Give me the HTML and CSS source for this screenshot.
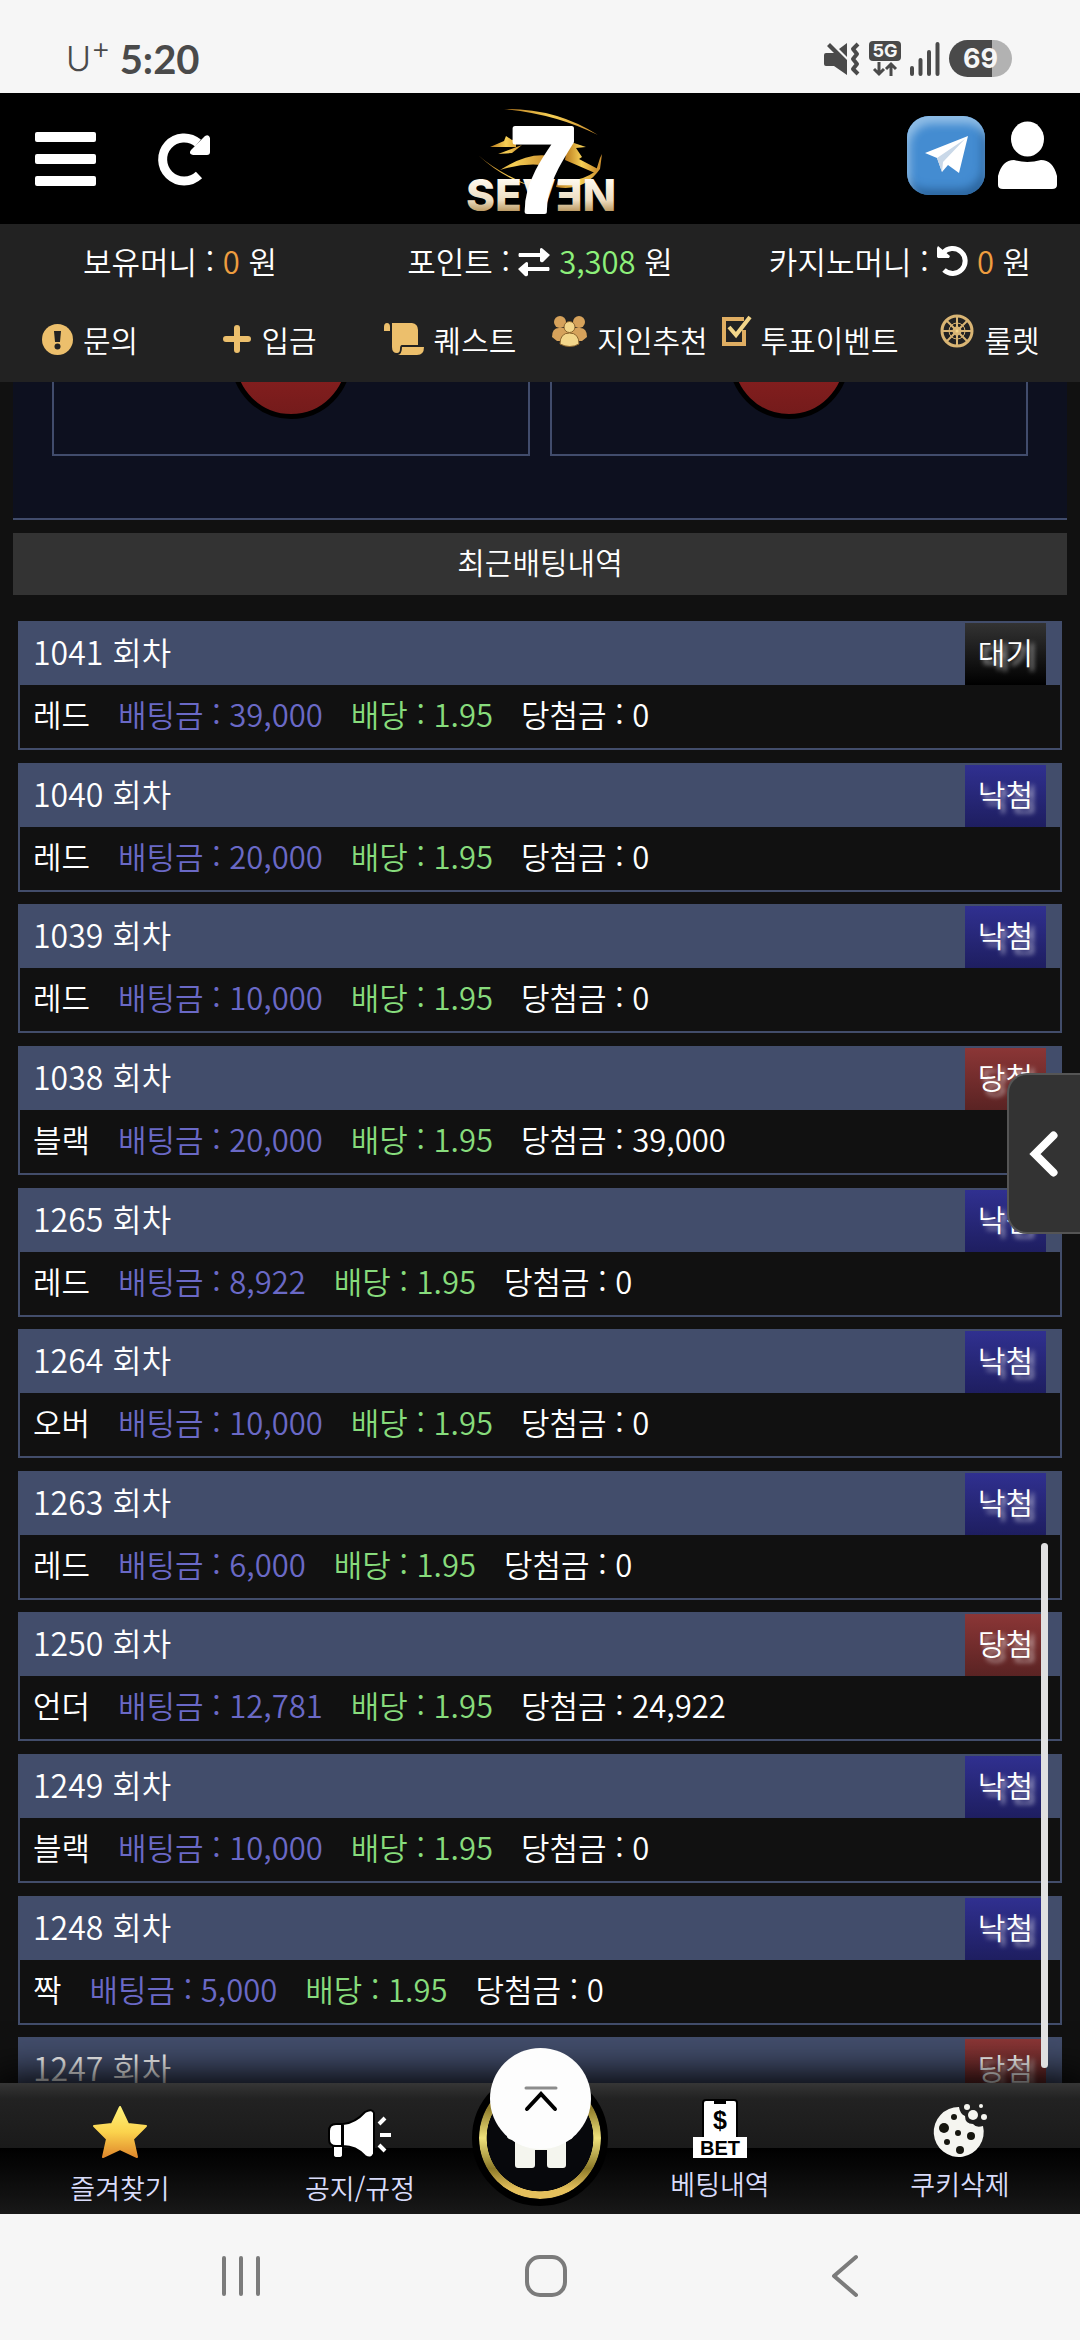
FILE: index.html
```html
<!DOCTYPE html>
<html lang="ko">
<head>
<meta charset="utf-8">
<meta name="viewport" content="width=device-width, initial-scale=1">
<title>SEVEN</title>
<link rel="stylesheet" href="styles.css">
</head>
<body>
<div class="status">
  <div class="status-side"><span class="carrier">U<sup>+</sup></span><span class="clock">5:20</span></div>
  <div class="status-side status-icons">
    <svg width="36" height="34" viewBox="0 0 36 34" fill="#4a4a4a"><path d="M2 11h8l-7-7 3-3 17 17v15L10 24H2q-2 0-2-2v-9q0-2 2-2zM15 7l8-6v14z"/><path d="M34 2l-5 5 4 5-4 5 4 5-4 5 5 5" fill="none" stroke="#4a4a4a" stroke-width="4" stroke-linejoin="round"/></svg>
    <span class="network"><span class="network-tag">5G</span><svg width="24" height="14" viewBox="0 0 24 14" fill="none" stroke="#4a4a4a" stroke-width="3"><path d="M6 0v12M1 7l5 5 5-5M18 14V2M13 7l5-5 5 5"/></svg></span>
    <svg width="30" height="34" viewBox="0 0 30 34" stroke="#4a4a4a" stroke-width="4" stroke-linecap="round"><path d="M2 26v6M10.500 18v14M19 10v22M27.500 2v30"/></svg>
    <span class="battery">69</span>
  </div>
</div>

<header class="header">
  <div class="header-side">
    <button class="icon-btn" aria-label="메뉴"><svg width="61" height="54" viewBox="0 0 61 54" fill="#fff"><rect width="61" height="10" y="0" rx="2"/><rect width="61" height="10" y="22" rx="2"/><rect width="61" height="10" y="44" rx="2"/></svg></button>
    <button class="icon-btn" aria-label="새로고침"><svg width="52" height="52" viewBox="0 0 52 52"><path d="M40 10A21.500 21.500 0 1 0 41 42" fill="none" stroke="#fff" stroke-width="9"/><path d="M47 3q4-2 5 2v14q0 3-3 3H35q-5-1-2-5z" fill="#fff"/></svg></button>
  </div>
  <a class="logo" href="#" aria-label="SEVEN">
    <svg width="152" height="108" viewBox="0 0 152 108">
      <defs>
        <linearGradient id="gold" x1="0" y1="0" x2="1" y2="0"><stop offset="0" stop-color="#b8791d"/><stop offset=".5" stop-color="#f6cf55"/><stop offset="1" stop-color="#c98b2c"/></linearGradient>
        <linearGradient id="letters" x1="0" y1="0" x2="0" y2="1"><stop offset=".2" stop-color="#fffaf0"/><stop offset=".6" stop-color="#ecdcc0"/><stop offset=".85" stop-color="#b08a4c"/></linearGradient>
      </defs>
      <g fill="url(#gold)">
        <path d="M40 4Q92 3 134 30Q92 9 40 4z"/>
        <path d="M26 42l14-6 2-5 6 4 4-1v8zM34 49l24-9-10 8z"/>
        <path d="M104 36l18 6-10 1 6 9-3 2 19 10-3 4-30-13z"/>
        <path d="M14 50Q32 66 62 79l10-4 2 8Q42 76 14 50zM36 65q28-18 50-14l-8 9q-20-2-42 5z"/>
        <path d="M132 66l4-13 2-4-2 15q-16 23-44 18l2-7q20 4 38-9z"/>
      </g>
      <text x="2" y="106" font-family="Inter, sans-serif" font-weight="800" font-size="44" fill="url(#letters)">SEVƎN</text>
      <text x="46" y="106" font-family="Liberation Sans, Arial, sans-serif" font-weight="700" font-size="120" fill="#fff" stroke="#fff" stroke-width="5" stroke-linejoin="round">7</text>
    </svg>
  </a>
  <div class="header-side header-right">
    <a class="telegram" href="#" aria-label="텔레그램"><svg width="43" height="38" viewBox="0 0 43 38"><path d="M0 17L43 0 34 37 23 29 17 36 12 22z" fill="#fff"/><path d="M12 22L40 3 18 26 17 36z" fill="#c9d8e8"/></svg></a>
    <button class="icon-btn" aria-label="내 정보"><svg width="59" height="68" viewBox="0 0 59 68" fill="#fff"><ellipse cx="29.500" cy="18" rx="16.500" ry="17.500"/><path d="M16 39q13 4 27 0 12 0 16 16v9q0 4-5 4H5q-5 0-5-4v-9q4-16 16-16z"/></svg></button>
  </div>
</header>

<section class="account">
  <div class="balances">
    <p>보유머니 : <b class="orange">0</b> 원</p>
    <p>포인트 : <svg width="32" height="28" viewBox="0 0 32 28" fill="#fff"><path d="M1 5h21V1q1-2 3 0l7 6-7 7q-2 1-3-1V9H1q-1-2 0-4zM31 19H10v-4q-1-2-3 0l-7 6 7 7q2 1 3-1v-4h21q1-2 0-4z"/></svg> <b class="green">3,308</b> 원</p>
    <p>카지노머니 : <svg width="31" height="31" viewBox="0 0 31 31"><path d="M6 8A12.500 12.500 0 1 1 7 25" fill="none" stroke="#fff" stroke-width="5"/><path d="M0 3l1-2 12 10-1 2H1l-1-1z" fill="#fff"/></svg> <b class="orange">0</b> 원</p>
  </div>
  <nav class="shortcuts">
    <a href="#"><svg width="31" height="31" viewBox="0 0 31 31"><circle cx="15.500" cy="15.500" r="15.500" fill="#ecbf6c"/><path d="M12 7h7l-1 11h-5z" fill="#222"/><circle cx="15.500" cy="22.500" r="3" fill="#222"/></svg>문의</a>
    <a href="#"><svg width="28" height="28" viewBox="0 0 28 28"><path d="M14 3v22M3 14h22" stroke="#ecbf6c" stroke-width="6" stroke-linecap="round"/></svg>입금</a>
    <a href="#"><svg width="40" height="32" viewBox="0 0 40 32" fill="#ecbf6c"><path d="M0 8V4q0-4 3-4t3 4v4zM8 0h20q6 1 6 7v15H18q-2 0-2 4 0 4-3 4-5 0-5-6zM18 24h22q0 8-7 8H14q4-1 4-8z"/></svg>퀘스트</a>
    <a href="#"><svg class="lift" width="35" height="31" viewBox="0 0 35 31"><g fill="#d6a25b"><circle cx="8" cy="6" r="6"/><circle cx="27" cy="6" r="6"/><path d="M0 21q0-9 7-9h21q7 0 7 9l-5 4H5z"/></g><g fill="#f3d68a" stroke="#8a642d"><circle cx="17.500" cy="11" r="5.500"/><path d="M8 28q0-11 9.500-11T27 28q-9 5-19 0z"/></g></svg>지인추천</a>
    <a href="#"><svg class="lift" width="29" height="31" viewBox="0 0 29 31" fill="none" stroke="#e0ae62" stroke-width="4"><path d="M22 3H2v25h20V14"/><path d="M7 11l7 8L28 1" stroke="#f3d68a"/></svg>투표이벤트</a>
    <a href="#"><svg class="lift" width="34" height="34" viewBox="0 0 34 34" fill="none" stroke="#d9b574" stroke-width="3"><circle cx="17" cy="17" r="15"/><circle cx="17" cy="17" r="8" stroke-width="1"/><path d="M17 1v32M1 17h32M6 6l22 22M28 6L6 28" stroke-width="2"/><circle cx="17" cy="17" r="3" fill="#f3d68a"/></svg>룰렛</a>
  </nav>
</section>

<main class="main">
  <section class="board">
    <div class="pick"><span class="ball"></span></div>
    <div class="pick"><span class="ball"></span></div>
  </section>
  <h1 class="title">최근배팅내역</h1>
  <ul class="bets">
    <li><header><span>1041 회차</span><span class="badge wait">대기</span></header><p><span>레드</span><span class="stake">배팅금 : 39,000</span><span class="odds">배당 : 1.95</span><span>당첨금 : 0</span></p></li>
    <li><header><span>1040 회차</span><span class="badge lose">낙첨</span></header><p><span>레드</span><span class="stake">배팅금 : 20,000</span><span class="odds">배당 : 1.95</span><span>당첨금 : 0</span></p></li>
    <li><header><span>1039 회차</span><span class="badge lose">낙첨</span></header><p><span>레드</span><span class="stake">배팅금 : 10,000</span><span class="odds">배당 : 1.95</span><span>당첨금 : 0</span></p></li>
    <li><header><span>1038 회차</span><span class="badge win">당첨</span></header><p><span>블랙</span><span class="stake">배팅금 : 20,000</span><span class="odds">배당 : 1.95</span><span>당첨금 : 39,000</span></p></li>
    <li><header><span>1265 회차</span><span class="badge lose">낙첨</span></header><p><span>레드</span><span class="stake">배팅금 : 8,922</span><span class="odds">배당 : 1.95</span><span>당첨금 : 0</span></p></li>
    <li><header><span>1264 회차</span><span class="badge lose">낙첨</span></header><p><span>오버</span><span class="stake">배팅금 : 10,000</span><span class="odds">배당 : 1.95</span><span>당첨금 : 0</span></p></li>
    <li><header><span>1263 회차</span><span class="badge lose">낙첨</span></header><p><span>레드</span><span class="stake">배팅금 : 6,000</span><span class="odds">배당 : 1.95</span><span>당첨금 : 0</span></p></li>
    <li><header><span>1250 회차</span><span class="badge win">당첨</span></header><p><span>언더</span><span class="stake">배팅금 : 12,781</span><span class="odds">배당 : 1.95</span><span>당첨금 : 24,922</span></p></li>
    <li><header><span>1249 회차</span><span class="badge lose">낙첨</span></header><p><span>블랙</span><span class="stake">배팅금 : 10,000</span><span class="odds">배당 : 1.95</span><span>당첨금 : 0</span></p></li>
    <li><header><span>1248 회차</span><span class="badge lose">낙첨</span></header><p><span>짝</span><span class="stake">배팅금 : 5,000</span><span class="odds">배당 : 1.95</span><span>당첨금 : 0</span></p></li>
    <li><header><span>1247 회차</span><span class="badge win">당첨</span></header></li>
  </ul>
  <button class="drawer" aria-label="열기"><svg width="28" height="46" viewBox="0 0 28 46"><path d="M23.500 4.500L5 23l18.500 18.500" fill="none" stroke="#fff" stroke-width="8" stroke-linecap="round"/></svg></button>
</main>

<nav class="tabs">
  <span class="scrollbar"></span>
  <a href="#"><svg width="56" height="54" viewBox="0 0 56 54"><defs><linearGradient id="star" x1="0" y1="0" x2="0" y2="1"><stop offset="0" stop-color="#fff27a"/><stop offset=".5" stop-color="#fbd34d"/><stop offset="1" stop-color="#e0892c"/></linearGradient></defs><path d="M28 2l8 17 18 2-13 13 4 18-17-8-17 8 4-18L2 21l18-2z" fill="url(#star)" stroke="url(#star)" stroke-width="2" stroke-linejoin="round"/></svg><span>즐겨찾기</span></a>
  <a href="#"><svg width="64" height="50" viewBox="0 0 64 50" fill="#fff" stroke="#000" stroke-width="2"><path d="M5 37h10v9q0 3-4 3H9q-4 0-4-3zM8 15h6v22H8q-7 0-7-7v-8q0-7 7-7zM15 15Q27 14 37 3q7-4 9 1v41q-3 6-9 2Q28 37 15 37z"/><path d="M51 15l6-6M52 26h11M51 36l6 6" stroke="#fff" stroke-width="4"/></svg><span>공지/규정</span></a>
  <a class="home" href="#" aria-label="홈"><span class="home-ring"><svg width="66" height="60" viewBox="0 0 66 60" fill="#f4f5ee"><path d="M33 0L66 28q0 4-7 4v25q0 3-3 3H43q-3 0-3-3V42H28v15q0 3-3 3H11q-3 0-3-3V32q-8 0-8-4z"/></svg></span></a>
  <a class="raised" href="#"><svg width="56" height="60" viewBox="0 0 56 60"><path d="M11 4q0-3 3-3h28q3 0 3 3v36H11z" fill="#fff" stroke="#000" stroke-width="2"/><path d="M22 1h12v4H22z"/><path d="M1 38h54v21H1z" fill="#fff"/><text x="28" y="30" text-anchor="middle" font-family="Liberation Sans, Arial, sans-serif" font-weight="700" font-size="25">$</text><text x="28" y="56" text-anchor="middle" font-family="Liberation Sans, Arial, sans-serif" font-weight="700" font-size="20">BET</text></svg><span>베팅내역</span></a>
  <a class="raised" href="#"><svg width="54" height="56" viewBox="0 0 54 56"><path d="M26 4q1 7 6 9 0 8 8 8 3 4 10 2a25 25 0 1 1-24-19z" fill="#f5f5f0"/><g fill="#16160f"><circle cx="11" cy="25" r="5"/><circle cx="21" cy="14" r="3"/><circle cx="38" cy="33" r="4"/><circle cx="25" cy="30" r="3"/><circle cx="14" cy="39" r="3"/><circle cx="27" cy="47" r="4"/></g><g fill="#f5f5f0"><circle cx="34" cy="4" r="3"/><circle cx="40" cy="12" r="5"/><circle cx="48" cy="3" r="2"/><circle cx="51" cy="14" r="3"/></g></svg><span>쿠키삭제</span></a>
  <button class="to-top" aria-label="맨 위로"><svg width="34" height="26" viewBox="0 0 34 26" fill="none" stroke-linecap="round"><path d="M2 2h30" stroke="#8c8c8c" stroke-width="3"/><path d="M3 23L17 8l14 15" stroke="#000" stroke-width="4"/></svg></button>
</nav>

<nav class="system">
  <button class="icon-btn" aria-label="최근 앱"><svg width="38" height="42" viewBox="0 0 38 42" stroke="#7b7b7b" stroke-width="4" stroke-linecap="round"><path d="M2 3v36M19 3v36M36 3v36"/></svg></button>
  <button class="icon-btn" aria-label="홈 화면"><svg width="42" height="42" viewBox="0 0 42 42" fill="none" stroke="#7b7b7b" stroke-width="4"><rect x="2" y="2" width="38" height="38" rx="13"/></svg></button>
  <button class="icon-btn" aria-label="뒤로"><svg width="28" height="42" viewBox="0 0 28 42" fill="none" stroke="#7b7b7b" stroke-width="4" stroke-linecap="round" stroke-linejoin="round"><path d="M25 2L3 21l22 19"/></svg></button>
</nav>
</body>
</html>
```

FILE: styles.css
```css
* { box-sizing: border-box; margin: 0; padding: 0; }

body {
  display: flex;
  flex-direction: column;
  height: 100vh;
  overflow: hidden;
  background: #111;
  color: #fff;
  font: 350 31px/40px "Noto Sans CJK KR", "Noto Sans", sans-serif;
}

svg { display: block; flex: none; overflow: visible; }
a { color: inherit; text-decoration: none; }
b { font-weight: inherit; }
button { border: 0; background: none; font: inherit; }
.icon-btn { display: block; }
.orange { color: #ee9d3f; }
.green { color: #8df07a; }

/* device status bar */
.status {
  display: flex;
  justify-content: space-between;
  align-items: center;
  padding: 24px 68px 0 66px;
  height: 93px;
  flex: none;
  background: #f6f6f6;
  color: #4a4a4a;
  font-family: Inter, sans-serif;
}
.status-side { display: flex; align-items: center; gap: 9px; }
.carrier { font-size: 34px; font-weight: 300; }
.carrier sup { font-size: 30px; line-height: 0; vertical-align: 12px; }
.clock { font-family: Lato, sans-serif; font-size: 40px; font-weight: 700; }
.network { display: flex; flex-direction: column; align-items: center; gap: 1px; }
.network-tag {
  width: 32px;
  border-radius: 4px;
  background: #4a4a4a;
  color: #f6f6f6;
  font-size: 18px;
  font-weight: 700;
  line-height: 20px;
  text-align: center;
}
.battery {
  width: 63px;
  border-radius: 19px;
  background: linear-gradient(90deg, #4a4a4a 68%, #b2b2b2 68%);
  color: #f6f6f6;
  font-size: 27px;
  font-weight: 700;
  line-height: 37px;
  text-align: center;
}

/* site header */
.header {
  display: grid;
  grid-template-columns: 1fr auto 1fr;
  align-items: center;
  flex: none;
  height: 131px;
  padding: 0 23px 0 35px;
  background: #000;
}
.header-side { display: flex; align-items: center; gap: 62px; }
.header-right { justify-content: flex-end; gap: 13px; padding-bottom: 7px; }
.logo { margin-right: 12px; }
.telegram {
  display: grid;
  place-items: center;
  width: 78px;
  height: 79px;
  border-radius: 22px;
  background: #448cd1;
  box-shadow: inset 3px 8px 8px #8fbde6, inset -3px -6px 8px #2c659e;
}

/* balances and shortcuts */
.account { flex: none; height: 158px; background: #222; }
.balances { display: grid; grid-template-columns: repeat(3, 1fr); padding-top: 17px; height: 83px; }
.balances p { text-align: center; white-space: nowrap; }
.balances svg { display: inline-block; vertical-align: -2px; }
.shortcuts { display: grid; grid-template-columns: repeat(6, 1fr); font-size: 30px; }
.shortcuts a { display: flex; justify-content: center; align-items: center; gap: 10px; height: 64px; white-space: nowrap; }
.lift { margin-bottom: 16px; }

/* scrolling content */
.main { position: relative; flex: 1; min-height: 0; overflow: hidden; padding: 0 13px; }
.board {
  display: grid;
  grid-template-columns: 1fr 1fr;
  gap: 20px;
  padding: 0 39px 62px;
  border-bottom: 2px solid #414c6c;
  background: #0d101f;
}
.pick { height: 74px; border: 2px solid #414c6c; border-top: 0; overflow: hidden; }
.ball {
  display: block;
  width: 120px;
  height: 120px;
  margin: -83px auto 0;
  border: 5px solid #000;
  border-radius: 50%;
  background: linear-gradient(#a22424, #741b1b);
}
.title {
  margin-top: 13px;
  padding-bottom: 6px;
  background: #333;
  font-size: 30px;
  font-weight: 350;
  line-height: 56px;
  text-align: center;
}
.bets { list-style: none; padding: 26px 5px 0; }
.bets li { margin-bottom: 13px; border: 2px solid #424d6b; }
.bets li:nth-child(5n+2), .bets li:nth-child(5n) { margin-bottom: 12px; }
.bets header {
  display: flex;
  justify-content: space-between;
  padding: 0 14px 0 13px;
  background: #424d6b;
  font-size: 32px;
  line-height: 56px;
}
.bets p { display: flex; gap: 28px; padding: 0 13px 6px; line-height: 57px; }
.stake { color: #6a69c6; }
.odds { color: #87dc7c; }
.badge { padding: 0 13px 6px; font-size: 30px; text-shadow: 4px 4px 5px rgba(255, 255, 255, .7); }
.wait { background: linear-gradient(#333, #000); }
.lose { background: linear-gradient(#303090, #1e1e60); }
.win { background: linear-gradient(#8b3636, #5a2323); }

.drawer {
  position: absolute;
  top: 691px;
  right: 0;
  display: flex;
  align-items: center;
  padding-left: 21px;
  width: 73px;
  height: 161px;
  border: 2px solid #555;
  border-right: 0;
  border-radius: 20px 0 0 20px;
  background: #333;
}

/* bottom tabs */
.tabs {
  position: relative;
  display: grid;
  grid-template-columns: 2fr 2fr 1fr 2fr 2fr;
  grid-template-rows: 100%;
  flex: none;
  height: 131px;
  background: linear-gradient(#363636, #222 12%, #1a1a1a 50%, #000 50%, #181818);
  box-shadow: 0 0 36px 8px #000;
  color: #d9dcfa;
  font-size: 27px;
}
.tabs > a { display: flex; flex-direction: column; align-items: center; justify-content: flex-end; gap: 9px; padding-bottom: 6px; }
.tabs > .raised { gap: 5px; padding-bottom: 10px; }
.tabs > .home { padding-bottom: 8px; }
.home-ring {
  display: grid;
  place-items: center;
  flex: none;
  width: 136px;
  height: 136px;
  margin: 0 -8px;
  border: 7px solid #000;
  border-radius: 50%;
  background: radial-gradient(circle closest-side, #07080c 87%, transparent 88%), linear-gradient(#e5c05c, #8d7a29 25%, #efe17b 50%, #8d7a29 75%, #e5c05c 92%);
  background-clip: padding-box;
}
.to-top {
  position: absolute;
  top: -35px;
  left: 50%;
  margin-left: -50px;
  display: grid;
  place-items: center;
  width: 101px;
  height: 101px;
  border-radius: 50%;
  background: #fdfdfd;
}
.scrollbar {
  position: absolute;
  right: 32px;
  bottom: 146px;
  width: 7px;
  height: 525px;
  border-radius: 4px;
  background: #e0e0e1;
}

/* device navigation */
.system {
  position: relative;
  display: flex;
  justify-content: space-between;
  align-items: center;
  flex: none;
  height: 126px;
  padding: 0 221px 2px 222px;
  background: #f6f6f6;
}
```
